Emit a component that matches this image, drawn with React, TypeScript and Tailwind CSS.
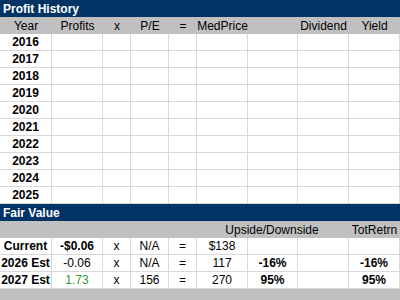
const cols = 'grid grid-cols-[52px_51px_28px_38px_28px_51px_50px_51px_51px]';

const years = ['2016', '2017', '2018', '2019', '2020', '2021', '2022', '2023', '2024', '2025'];

const headers = ['Year', 'Profits', 'x', 'P/E', '=', 'MedPrice', '', 'Dividend', 'Yield'];

type Cell = { text: string; bold?: boolean; green?: boolean };

const fairRows: Cell[][] = [
    [
        { text: 'Current', bold: true },
        { text: '-$0.06', bold: true },
        { text: 'x' },
        { text: 'N/A' },
        { text: '=' },
        { text: '$138' },
        { text: '' },
        { text: '' },
        { text: '' },
    ],
    [
        { text: '2026 Est', bold: true },
        { text: '-0.06' },
        { text: 'x' },
        { text: 'N/A' },
        { text: '=' },
        { text: '117' },
        { text: '-16%', bold: true },
        { text: '' },
        { text: '-16%', bold: true },
    ],
    [
        { text: '2027 Est', bold: true },
        { text: '1.73', green: true },
        { text: 'x' },
        { text: '156' },
        { text: '=' },
        { text: '270' },
        { text: '95%', bold: true },
        { text: '' },
        { text: '95%', bold: true },
    ],
];

function SectionTitle({ title }: { title: string }) {
    return (
        <div className="h-[17px] bg-[#003366] flex items-center pl-[3px] text-white font-bold text-[12px] leading-none">
            {title}
        </div>
    );
}

export default function App() {
    return (
        <div
            className="w-[400px] h-[300px] bg-[#c0c0c0] overflow-hidden text-[12px] leading-none text-black"
            style={{ fontFamily: '"Liberation Sans", Arial, sans-serif' }}
        >
            {/* Profit History */}
            <SectionTitle title="Profit History" />
            <div className={`${cols} h-[17px] bg-[#c0c0c0]`}>
                {headers.map((h, i) => (
                    <div key={i} className="flex items-center justify-center whitespace-nowrap">
                        {h}
                    </div>
                ))}
            </div>
            {years.map((y) => (
                <div key={y} className={`${cols} h-[17px] bg-white`}>
                    {headers.map((_, i) => (
                        <div
                            key={i}
                            className="flex items-center justify-center border-r border-b border-[#d9d9d9] font-bold"
                        >
                            {i === 0 ? y : ''}
                        </div>
                    ))}
                </div>
            ))}

            {/* Fair Value */}
            <SectionTitle title="Fair Value" />
            <div className={`${cols} h-[17px] bg-[#c0c0c0]`}>
                <div className="col-span-5" />
                <div className="col-span-3 flex items-center justify-center pr-[2px] whitespace-nowrap">
                    Upside/Downside
                </div>
                <div className="flex items-center justify-center whitespace-nowrap">TotRetrn</div>
            </div>
            {fairRows.map((row, r) => (
                <div key={r} className={`${cols} h-[17px] bg-white`}>
                    {row.map((c, i) => (
                        <div
                            key={i}
                            className={`flex items-center justify-center whitespace-nowrap border-r border-b border-[#d9d9d9] ${
                                c.bold ? 'font-bold' : ''
                            } ${c.green ? 'text-[#339933]' : ''}`}
                        >
                            {c.text}
                        </div>
                    ))}
                </div>
            ))}
        </div>
    );
}
